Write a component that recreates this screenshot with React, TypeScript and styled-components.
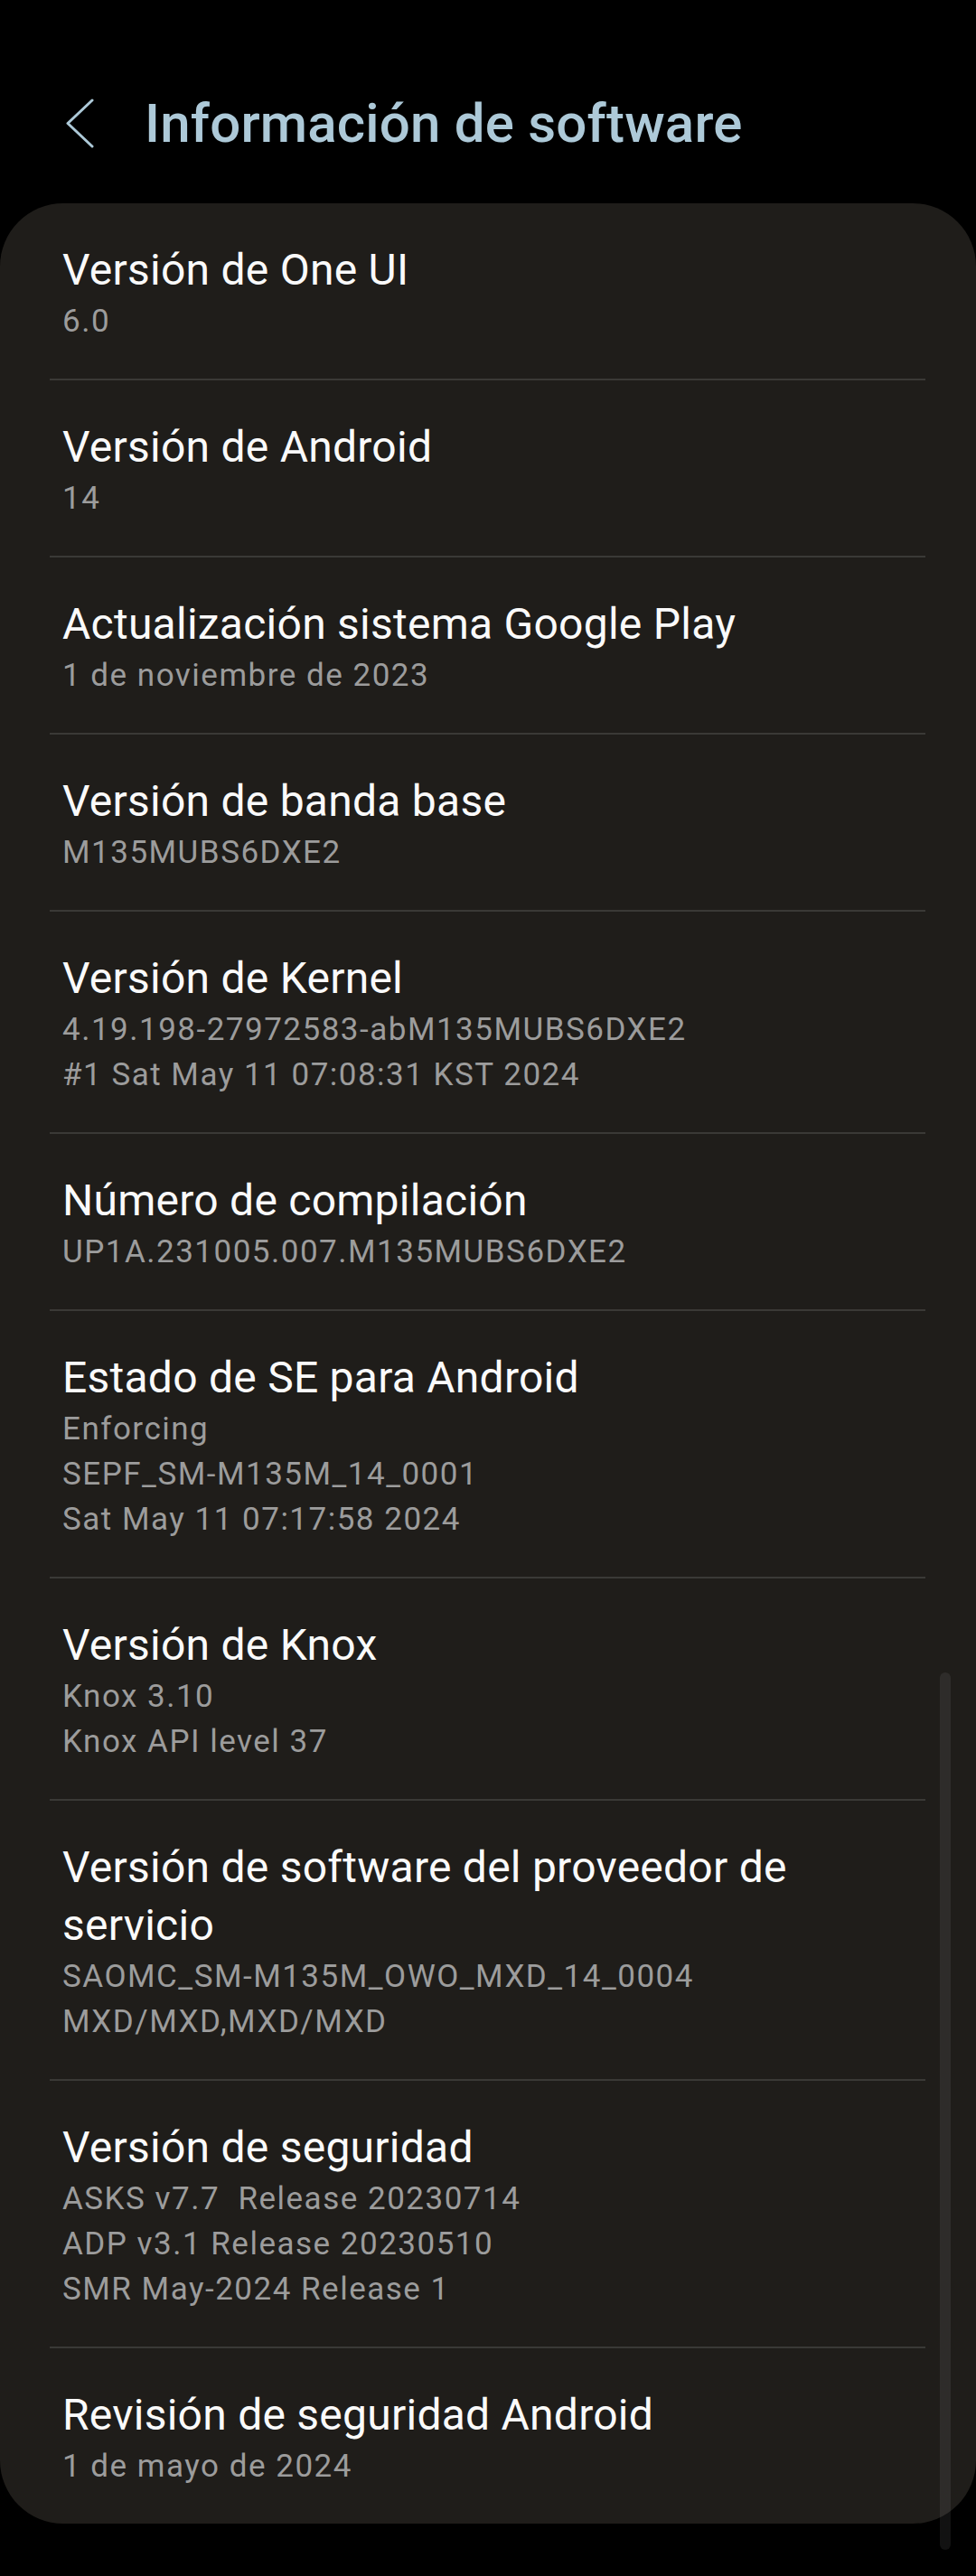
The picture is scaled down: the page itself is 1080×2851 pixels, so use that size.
import React from "react";
import styled, { createGlobalStyle } from "styled-components";

const GlobalStyle = createGlobalStyle`
  html, body {
    margin: 0;
    padding: 0;
    background: #000000;
  }
  #root {
    width: 1080px;
    min-height: 2851px;
  }
`;

const Screen = styled.div`
  position: relative;
  width: 1080px;
  height: 2851px;
  background: #000000;
  font-family: Roboto, "Noto Sans", sans-serif;
  overflow: hidden;
`;

const Header = styled.header`
  display: flex;
  align-items: center;
  box-sizing: border-box;
  height: 225px;
  padding: 48px 0 0 73px;
`;

const BackButton = styled.div`
  display: flex;
  width: 32px;
  height: 56px;
  margin-right: 55px;
`;

const Title = styled.h1`
  margin: 0;
  font-family: Roboto, "Noto Sans", sans-serif;
  font-weight: 500;
  font-size: 60px;
  letter-spacing: 0.2px;
  color: #adc9d8;
`;

const Card = styled.section`
  background: #1f1d1a;
  border-radius: 70px;
  padding: 0 56px 0 55px;
`;

const Row = styled.div<{ $last?: boolean }>`
  padding: 42px 14px 38px 14px;
  border-bottom: ${(p) => (p.$last ? "none" : "2px solid #3a3936")};
`;

const RowTitle = styled.div`
  font-size: 48px;
  line-height: 64px;
  color: #fafafa;
  font-weight: 400;
  letter-spacing: 0.25px;
`;

const RowValue = styled.div`
  font-size: 35px;
  line-height: 50px;
  color: #9c9c9c;
  letter-spacing: 1.5px;
  white-space: pre;
`;

const ScrollThumb = styled.div`
  position: absolute;
  left: 1040px;
  top: 1851px;
  width: 12px;
  height: 971px;
  border-radius: 6px;
  background: rgba(255, 255, 255, 0.07);
`;

type Item = { title: string; values: string[] };

const items: Item[] = [
  { title: "Versión de One UI", values: ["6.0"] },
  { title: "Versión de Android", values: ["14"] },
  { title: "Actualización sistema Google Play", values: ["1 de noviembre de 2023"] },
  { title: "Versión de banda base", values: ["M135MUBS6DXE2"] },
  {
    title: "Versión de Kernel",
    values: ["4.19.198-27972583-abM135MUBS6DXE2", "#1 Sat May 11 07:08:31 KST 2024"],
  },
  { title: "Número de compilación", values: ["UP1A.231005.007.M135MUBS6DXE2"] },
  {
    title: "Estado de SE para Android",
    values: ["Enforcing", "SEPF_SM-M135M_14_0001", "Sat May 11 07:17:58 2024"],
  },
  { title: "Versión de Knox", values: ["Knox 3.10", "Knox API level 37"] },
  {
    title: "Versión de software del proveedor de servicio",
    values: ["SAOMC_SM-M135M_OWO_MXD_14_0004", "MXD/MXD,MXD/MXD"],
  },
  {
    title: "Versión de seguridad",
    values: ["ASKS v7.7  Release 20230714", "ADP v3.1 Release 20230510", "SMR May-2024 Release 1"],
  },
  { title: "Revisión de seguridad Android", values: ["1 de mayo de 2024"] },
];

const ChevronLeft = () => (
  <svg width="32" height="56" viewBox="0 0 32 56" fill="none">
    <polyline
      points="29,2 2,27.5 29,53"
      stroke="#adc9d8"
      strokeWidth="3"
      strokeLinecap="round"
      strokeLinejoin="round"
    />
  </svg>
);

export default function App() {
  return (
    <Screen>
      <GlobalStyle />
      <Header>
        <BackButton>
          <ChevronLeft />
        </BackButton>
        <Title>Información de software</Title>
      </Header>
      <Card>
        {items.map((item, i) => (
          <Row key={item.title} $last={i === items.length - 1}>
            <RowTitle>{item.title}</RowTitle>
            {item.values.map((v) => (
              <RowValue key={v}>{v}</RowValue>
            ))}
          </Row>
        ))}
      </Card>
      <ScrollThumb />
    </Screen>
  );
}
